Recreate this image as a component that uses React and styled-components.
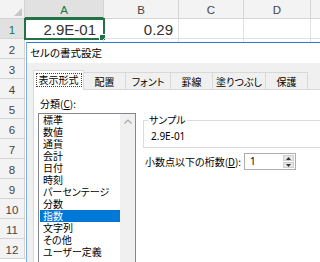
import React from 'react';
import styled, { createGlobalStyle } from 'styled-components';

const Global = createGlobalStyle`
  html, body { margin: 0; padding: 0; background: #fff; }
  body { width: 320px; height: 262px; overflow: hidden; font-family: "Liberation Sans", Arial, sans-serif; }
  * { box-sizing: border-box; }
`;

const Screen = styled.div`
  position: relative;
  width: 320px;
  height: 262px;
  overflow: hidden;
  background: #fff;
`;

/* ---------- spreadsheet ---------- */
const Sheet = styled.div`
  display: grid;
  grid-template-columns: 25px 79px 75px 65px 67px 40px;
  grid-template-rows: 19px repeat(12, 20px);
`;

const Corner = styled.div`
  background: #f3f3f3;
  border-right: 1px solid #d4d4d4;
  border-bottom: 1px solid #d4d4d4;
  display: flex;
  align-items: flex-end;
  justify-content: flex-end;
  padding: 0 2px 2px 0;
`;

const ColHead = styled.div`
  background: ${p => (p.$active ? '#e1e1e1' : '#f3f3f3')};
  color: ${p => (p.$active ? '#217346' : '#444')};
  border-right: 1px solid #d4d4d4;
  border-bottom: ${p => (p.$active ? '2px solid #217346' : '1px solid #d4d4d4')};
  font-size: 11.5px;
  line-height: 17px;
  padding-top: 2px;
  text-align: center;
`;

const RowHead = styled.div`
  background: ${p => (p.$active ? '#e1e1e1' : '#f3f3f3')};
  color: ${p => (p.$active ? '#217346' : '#444')};
  border-right: 1px solid #d4d4d4;
  border-bottom: 1px solid #d4d4d4;
  font-size: 11.5px;
  line-height: 16px;
  padding-top: 3px;
  text-align: center;
`;

const Cell = styled.div`
  position: relative;
  border-right: 1px solid #e1e1e1;
  border-bottom: 1px solid #e1e1e1;
  font-size: 15px;
  line-height: 18px;
  padding: 2px 5px 0 0;
  text-align: right;
  color: #333;
  ${p =>
    p.$selected &&
    `
    outline: 2px solid #217346;
    outline-offset: -1px;
    padding-right: 7px;
    &::after {
      content: '';
      position: absolute;
      right: -3px;
      bottom: -3px;
      width: 5px;
      height: 5px;
      background: #217346;
      border: 1px solid #fff;
    }
  `}
`;

/* ---------- dialog ---------- */
const Dialog = styled.div`
  position: absolute;
  left: 26px;
  top: 42px;
  width: 320px;
  height: 240px;
  background: #f0f0f0;
  border-top: 1px solid #2b7bd3;
  border-left: 1px solid #7fb0e6;
  font-family: "Noto Sans CJK JP", sans-serif;
  font-size: 10px;
  font-feature-settings: "palt";
  color: #000;
  display: flex;
  flex-direction: column;
`;

const TitleBar = styled.div`
  height: 20px;
  line-height: 20px;
  background: #fff;
  padding-left: 3px;
  font-size: 10.5px;
`;

const Body = styled.div`
  flex: 1;
  padding: 7px 0 0 6px;
  display: flex;
  flex-direction: column;
`;

const TabStrip = styled.div`
  display: flex;
  align-items: flex-end;
  height: 19px;
`;

const Tab = styled.div`
  position: relative;
  width: ${p => p.$w}px;
  height: ${p => (p.$selected ? 20 : 17)}px;
  margin-left: ${p => (p.$first ? 0 : -1)}px;
  margin-bottom: ${p => (p.$selected ? -1 : 0)}px;
  z-index: ${p => (p.$selected ? 1 : 0)};
  background: ${p => (p.$selected ? '#fff' : '#f0f0f0')};
  border: 1px solid #d9d9d9;
  border-bottom: none;
  display: flex;
  align-items: center;
  justify-content: center;
  padding-bottom: ${p => (p.$selected ? 2 : 0)}px;
  white-space: nowrap;
`;

const Focus = styled.span`
  border: 1px dotted #444;
  padding: 0 2px;
  line-height: 12px;
`;

const Panel = styled.div`
  flex: 1;
  background: #fff;
  border: 1px solid #d9d9d9;
  border-right: none;
  display: flex;
  padding: 8px 0 0 4px;
`;

const LeftCol = styled.div`
  width: 98px;
  display: flex;
  flex-direction: column;
`;

const FieldLabel = styled.div`
  margin-left: 2px;
  line-height: 12px;
  margin-bottom: 3px;
  white-space: nowrap;
`;

const Key = styled.span`
  text-decoration: underline;
`;

const ListBox = styled.div`
  height: 160px;
  border: 1px solid #828790;
  display: flex;
`;

const Items = styled.div`
  flex: 1;
  display: flex;
  flex-direction: column;
`;

const Item = styled.div`
  margin-left: 1px;
  height: 12px;
  line-height: 12px;
  padding-left: 3px;
  white-space: nowrap;
  background: ${p => (p.$selected ? '#0078d7' : 'transparent')};
  color: ${p => (p.$selected ? '#fff' : '#000')};
`;

const ScrollBar = styled.div`
  width: 15px;
  background: #f0f0f0;
  display: flex;
  flex-direction: column;
  align-items: center;
  padding-top: 5px;
`;

const RightCol = styled.div`
  flex: 1;
  margin-left: 7px;
  padding-top: 16px;
  display: flex;
  flex-direction: column;
`;

const Group = styled.fieldset`
  margin: 0;
  padding: 0 0 5px 7px;
  border: 1px solid #dcdcdc;
  border-right: none;
  min-width: 0;
`;

const Legend = styled.legend`
  padding: 0 1px;
  margin-left: -3px;
  line-height: 12px;
`;

const SampleValue = styled.div`
  margin-top: 4px;
  line-height: 12px;
  font-family: "Noto Sans", "Noto Sans CJK JP", sans-serif;
  font-size: 10px;
`;

const DigitsRow = styled.div`
  display: flex;
  align-items: center;
  margin: 5px 0 0 2px;
`;

const DigitsLabel = styled.div`
  width: 99px;
  white-space: nowrap;
  line-height: 12px;
`;

const Spin = styled.div`
  width: 52px;
  height: 17px;
  border: 1px solid #adadad;
  background: #fff;
  display: flex;
`;

const SpinValue = styled.div`
  flex: 1;
  padding-left: 5px;
  line-height: 15px;
  font-family: "Noto Sans", sans-serif;
`;

const SpinButtons = styled.div`
  width: 12px;
  display: flex;
  flex-direction: column;
  padding: 1px 1px 1px 0;
  gap: 1px;
`;

const SpinButton = styled.div`
  flex: 1;
  background: #e6e6e6;
  border: 1px solid #cfcfcf;
  display: flex;
  align-items: center;
  justify-content: center;
`;

const tabs = [
  { label: '表示形式', w: 51, selected: true },
  { label: '配置', w: 43 },
  { label: 'フォント', w: 46 },
  { label: '罫線', w: 43 },
  { label: '塗りつぶし', w: 54 },
  { label: '保護', w: 43 },
];

const categories = [
  '標準', '数値', '通貨', '会計', '日付', '時刻', 'パーセンテージ',
  '分数', '指数', '文字列', 'その他', 'ユーザー定義',
];

const cols = ['A', 'B', 'C', 'D', ''];

export default function App() {
  const rows = Array.from({ length: 12 }, (_, i) => i + 1);
  return (
    <Screen>
      <Global />
      <Sheet>
        <Corner>
          <svg width="8" height="8" viewBox="0 0 8 8">
            <polygon points="8,0 8,8 0,8" fill="#c8c8c8" />
          </svg>
        </Corner>
        {cols.map((c, i) => (
          <ColHead key={i} $active={c === 'A'}>{c}</ColHead>
        ))}
        {rows.map(r => (
          <React.Fragment key={r}>
            <RowHead $active={r === 1}>{r}</RowHead>
            <Cell $selected={r === 1}>{r === 1 ? '2.9E-01' : ''}</Cell>
            <Cell>{r === 1 ? '0.29' : ''}</Cell>
            <Cell />
            <Cell />
            <Cell />
          </React.Fragment>
        ))}
      </Sheet>

      <Dialog>
        <TitleBar>セルの書式設定</TitleBar>
        <Body>
          <TabStrip>
            {tabs.map((t, i) => (
              <Tab key={t.label} $w={t.w} $selected={t.selected} $first={i === 0}>
                {t.selected ? <Focus>{t.label}</Focus> : t.label}
              </Tab>
            ))}
          </TabStrip>
          <Panel>
            <LeftCol>
              <FieldLabel>分類(<Key>C</Key>):</FieldLabel>
              <ListBox>
                <Items>
                  {categories.map(c => (
                    <Item key={c} $selected={c === '指数'}>{c}</Item>
                  ))}
                </Items>
                <ScrollBar>
                  <svg width="8" height="5" viewBox="0 0 8 5">
                    <polyline points="0.5,4.5 4,1 7.5,4.5" fill="none" stroke="#a6a6a6" strokeWidth="1.2" />
                  </svg>
                </ScrollBar>
              </ListBox>
            </LeftCol>
            <RightCol>
              <Group>
                <Legend>サンプル</Legend>
                <SampleValue>2.9E-01</SampleValue>
              </Group>
              <DigitsRow>
                <DigitsLabel>小数点以下の桁数(<Key>D</Key>):</DigitsLabel>
                <Spin>
                  <SpinValue>1</SpinValue>
                  <SpinButtons>
                    <SpinButton>
                      <svg width="5" height="3" viewBox="0 0 5 3"><polygon points="0,3 5,3 2.5,0" fill="#333" /></svg>
                    </SpinButton>
                    <SpinButton>
                      <svg width="5" height="3" viewBox="0 0 5 3"><polygon points="0,0 5,0 2.5,3" fill="#333" /></svg>
                    </SpinButton>
                  </SpinButtons>
                </Spin>
              </DigitsRow>
            </RightCol>
          </Panel>
        </Body>
      </Dialog>
    </Screen>
  );
}
